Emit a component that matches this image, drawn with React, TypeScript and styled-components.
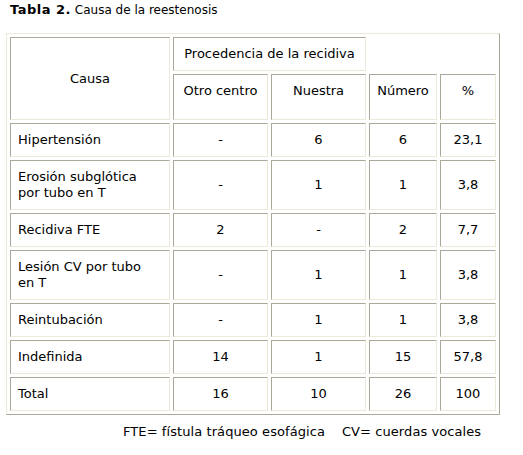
import React from 'react';
import styled, { createGlobalStyle } from 'styled-components';

const GlobalStyle = createGlobalStyle`
  html, body {
    margin: 0;
    padding: 0;
    background: #fff;
  }
  body {
    font-family: "DejaVu Sans", Verdana, sans-serif;
    font-size: 13px;
    line-height: 16px;
    color: #000;
  }
`;

const LIGHT = '#ECE9D8';
const DARK = '#ACA899';

const Page = styled.div`
  padding-top: 2px;
`;

const Caption = styled.div`
  margin-left: 10px;
  height: 16px;
  font-size: 12px;
  white-space: nowrap;

  b {
    font-size: 13px;
    font-weight: bold;
    letter-spacing: 0.5px;
  }
`;

const Table = styled.table`
  margin: 15px 0 0 6px;
  width: 494px;
  table-layout: fixed;
  border-collapse: separate;
  border-spacing: 3px;
  border-style: solid;
  border-width: 1px;
  border-color: ${LIGHT} ${DARK} ${DARK} ${LIGHT};
`;

const Cell = styled.td<{ $align?: 'left' | 'center'; $top?: boolean; $h?: number }>`
  box-sizing: border-box;
  padding: 8px 7px;
  border-style: solid;
  border-width: 1px;
  border-color: ${DARK} ${LIGHT} ${LIGHT} ${DARK};
  text-align: ${(p) => p.$align ?? 'center'};
  vertical-align: ${(p) => (p.$top ? 'top' : 'middle')};
  height: ${(p) => (p.$h ? `${p.$h}px` : 'auto')};
  font-weight: normal;
  white-space: nowrap;
`;

const Footnote = styled.div`
  margin: 9px 0 0 123px;
  white-space: pre;
  letter-spacing: 0.08px;
`;

type Row = { causa: React.ReactNode; otro: string; nuestra: string; numero: string; pct: string; h: number };

const rows: Row[] = [
  { causa: 'Hipertensión', otro: '-', nuestra: '6', numero: '6', pct: '23,1', h: 34 },
  { causa: <>Erosión subglótica<br />por tubo en T</>, otro: '-', nuestra: '1', numero: '1', pct: '3,8', h: 50 },
  { causa: 'Recidiva FTE', otro: '2', nuestra: '-', numero: '2', pct: '7,7', h: 34 },
  { causa: <>Lesión CV por tubo<br />en T</>, otro: '-', nuestra: '1', numero: '1', pct: '3,8', h: 50 },
  { causa: 'Reintubación', otro: '-', nuestra: '1', numero: '1', pct: '3,8', h: 34 },
  { causa: 'Indefinida', otro: '14', nuestra: '1', numero: '15', pct: '57,8', h: 34 },
  { causa: 'Total', otro: '16', nuestra: '10', numero: '26', pct: '100', h: 34 },
];

const App = () => {
  return (
    <Page>
      <GlobalStyle />
      <Caption>
        <b>Tabla 2.</b> Causa de la reestenosis
      </Caption>
      <Table>
        <colgroup>
          <col style={{ width: 160 }} />
          <col style={{ width: 95 }} />
          <col style={{ width: 95 }} />
          <col style={{ width: 68 }} />
          <col style={{ width: 56 }} />
        </colgroup>
        <tbody>
          <tr>
            <Cell as="th" rowSpan={2}>Causa</Cell>
            <Cell as="th" colSpan={2} $h={34}>Procedencia de la recidiva</Cell>
          </tr>
          <tr>
            <Cell as="th" $top $h={46}>Otro centro</Cell>
            <Cell as="th" $top>Nuestra</Cell>
            <Cell as="th" $top>Número</Cell>
            <Cell as="th" $top>%</Cell>
          </tr>
          {rows.map((r, i) => (
            <tr key={i}>
              <Cell $align="left" $h={r.h}>{r.causa}</Cell>
              <Cell>{r.otro}</Cell>
              <Cell>{r.nuestra}</Cell>
              <Cell>{r.numero}</Cell>
              <Cell>{r.pct}</Cell>
            </tr>
          ))}
        </tbody>
      </Table>
      <Footnote>{'FTE= fístula tráqueo esofágica    CV= cuerdas vocales'}</Footnote>
    </Page>
  );
};

export default App;
